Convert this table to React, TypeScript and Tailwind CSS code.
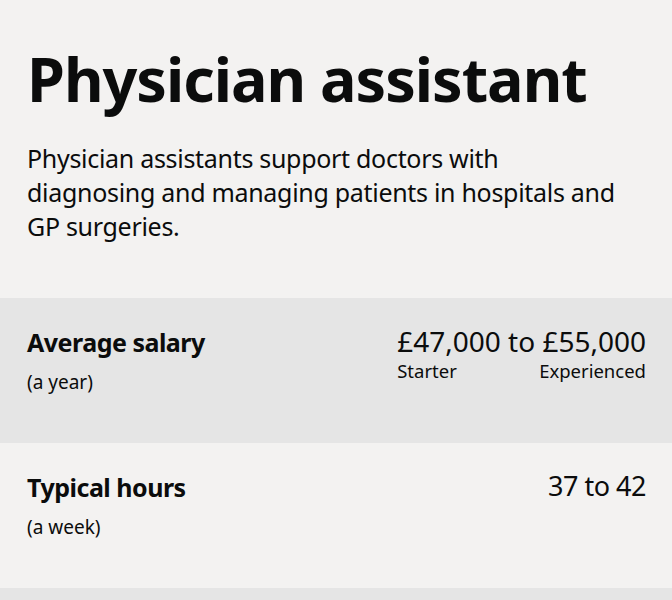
import React from 'react'

const font = { fontFamily: '"Noto Sans", "Liberation Sans", sans-serif' }

function Row({ label, period, shaded, children }: { label: string; period: string; shaded?: boolean; children: React.ReactNode }) {
  return (
    <div className={`flex justify-between h-[145px] pl-[27px] pr-[26px] pt-[26px] ${shaded ? 'bg-[#e5e5e5]' : ''}`}>
      <div>
        <div className="text-[25px] font-bold leading-[36px] tracking-[-0.5px] text-[#0b0c0c]">{label}</div>
        <div className="mt-[10px] text-[19px] leading-[24px] text-[#0b0c0c]">{period}</div>
      </div>
      <div className="pt-[2px]">{children}</div>
    </div>
  )
}

export default function App() {
  return (
    <div className="min-h-[600px] bg-[#f3f2f1] text-[#0b0c0c]" style={font}>
      <div className="px-[27px] pt-[39px] pb-[55px]">
        <h1 className="text-[61px] font-bold leading-[80px] tracking-[-1px]">Physician assistant</h1>
        <p className="mt-[22px] max-w-[595px] text-[25px] leading-[34px] tracking-[-0.3px]">
          Physician assistants support doctors with diagnosing and managing patients in hospitals and GP surgeries.
        </p>
      </div>
      <Row label="Average salary" period="(a year)" shaded>
        <div className="text-[28px] leading-[30px] text-right">£47,000 to £55,000</div>
        <div className="mt-[3px] flex justify-between text-[18.5px] leading-[24px]">
          <span>Starter</span>
          <span>Experienced</span>
        </div>
      </Row>
      <Row label="Typical hours" period="(a week)">
        <div className="text-[27px] leading-[30px] tracking-[-0.5px] text-right">37 to 42</div>
      </Row>
      <div className="bg-[#e5e5e5] h-[20px]" />
    </div>
  )
}
